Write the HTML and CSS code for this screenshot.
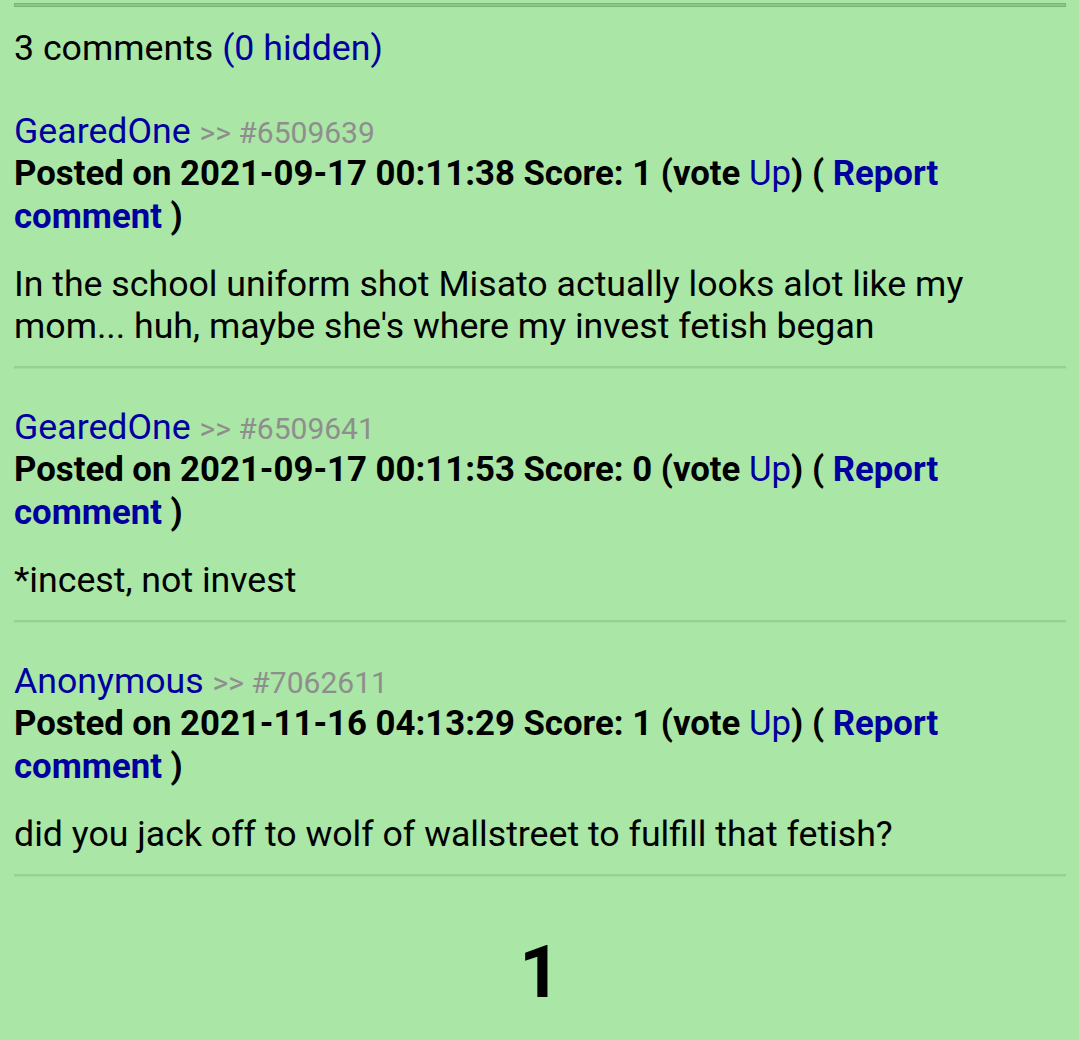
FILE: index.html
```html
<!DOCTYPE html>
<html>
<head>
<meta charset="utf-8">
<link rel="stylesheet" href="styles.css">
</head>
<body>
<div class="page">
  <hr class="rule-top">
  <div class="count">3 comments <a class="link" href="#">(0 hidden)</a></div>

  <div class="comment first">
    <div class="meta"><a class="link" href="#">GearedOne</a> <span class="id">&gt;&gt; #6509639</span></div>
    <div class="info">Posted on 2021-09-17 00:11:38 Score: 1 (vote <a class="link up" href="#">Up</a>) ( <a class="link" href="#">Report comment</a> )</div>
    <p class="body">In the school uniform shot Misato actually looks alot like my mom... huh, maybe she's where my invest fetish began</p>
  </div>
  <hr class="rule">

  <div class="comment">
    <div class="meta"><a class="link" href="#">GearedOne</a> <span class="id">&gt;&gt; #6509641</span></div>
    <div class="info">Posted on 2021-09-17 00:11:53 Score: 0 (vote <a class="link up" href="#">Up</a>) ( <a class="link" href="#">Report comment</a> )</div>
    <p class="body">*incest, not invest</p>
  </div>
  <hr class="rule">

  <div class="comment">
    <div class="meta"><a class="link" href="#">Anonymous</a> <span class="id">&gt;&gt; #7062611</span></div>
    <div class="info">Posted on 2021-11-16 04:13:29 Score: 1 (vote <a class="link up" href="#">Up</a>) ( <a class="link" href="#">Report comment</a> )</div>
    <p class="body">did you jack off to wolf of wallstreet to fulfill that fetish?</p>
  </div>
  <hr class="rule">

  <div class="pager">1</div>
</div>
</body>
</html>
```

FILE: styles.css
```css
html, body {
  margin: 0;
  padding: 0;
  background: #aae6a5;
}
body {
  font-family: Roboto, "Noto Sans", sans-serif;
  color: #000;
  font-size: 35.7px;
}
.page {
  padding: 0 13px 0 14px;
}
.link {
  color: #0000a0;
  text-decoration: none;
}
.rule-top {
  margin: 3px 0 0 0;
  height: 2px;
  border: 1px solid #7ab576;
  background: #8cc988;
}
.count {
  margin-top: 20px;
  line-height: 42px;
}
.comment {
  margin-top: 37px;
}
.comment.first {
  margin-top: 41px;
}
.meta {
  line-height: 42px;
}
.id {
  color: #8e8e8e;
  font-size: 30px;
  line-height: 1;
}
.info {
  font-weight: bold;
  font-size: 34.75px;
  line-height: 43px;
}
.info .up {
  font-weight: normal;
}
.body {
  margin: 25px 0 0 0;
  line-height: 42px;
}
.rule {
  margin: 19px 0 0 0;
  height: 0;
  border: 0;
  border-top: 2px solid #98d094;
  border-left: 1px solid #98d094;
  border-bottom: 1px solid #a2dc9e;
}
.pager {
  text-align: center;
  font-size: 72px;
  font-weight: bold;
  line-height: 84px;
  margin-top: 54px;
}
```
